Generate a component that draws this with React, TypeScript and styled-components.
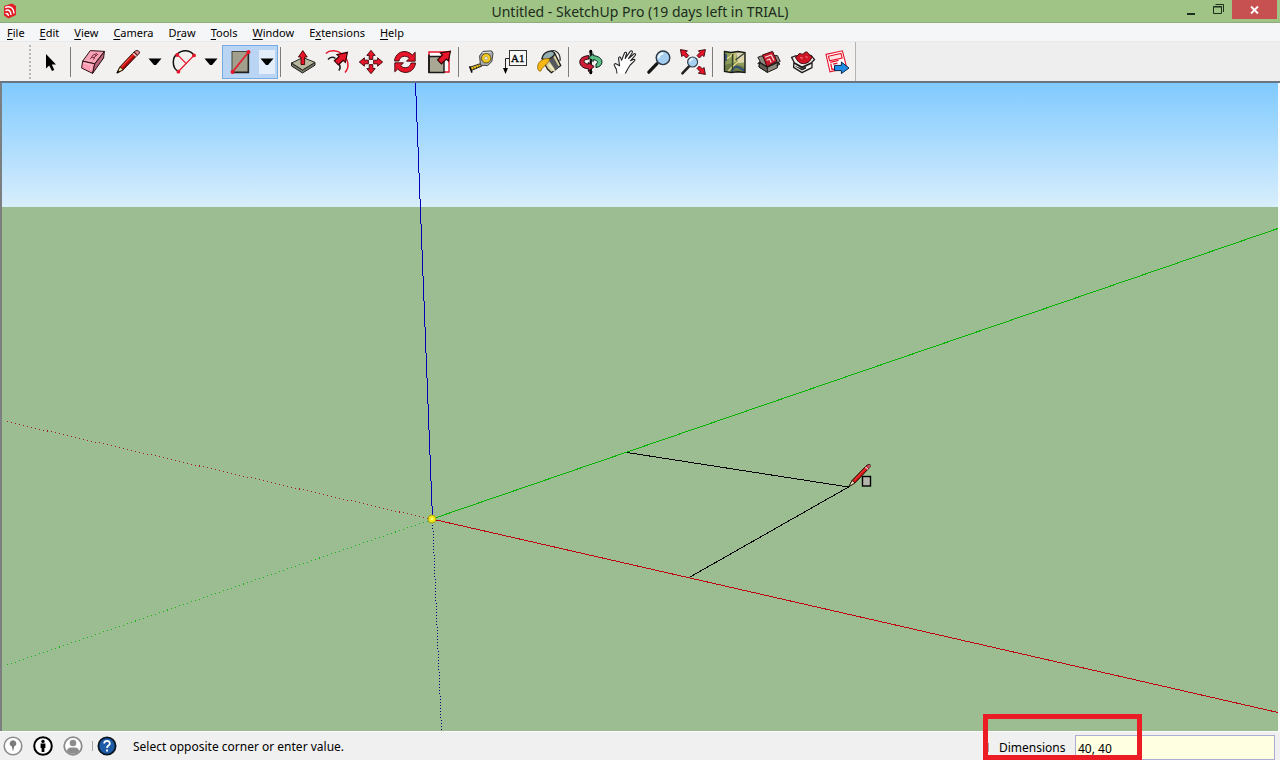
import React from 'react';
import styled, { createGlobalStyle } from 'styled-components';

const GlobalStyle = createGlobalStyle`
  * { box-sizing: border-box; }
  body { margin: 0; background: #f0f0f0; }
  button { font: inherit; color: inherit; }
`;

const Window = styled.div`
  display: flex;
  flex-direction: column;
  min-height: 100vh;
  font-family: 'Noto Sans', sans-serif;
  font-size: 12px;
  color: #000;
`;

const TitleBar = styled.header`
  display: grid;
  grid-template-columns: 1fr auto 1fr;
  height: 23px;
  background: #9fc485;
  border-bottom: 1px solid #8fad7c;
`;

const AppIcon = styled.svg`
  width: 16px;
  height: 16px;
  margin: 3px 2px;
`;

const Title = styled.h1`
  margin: 0;
  font-size: 14px;
  line-height: 23px;
  font-weight: 400;
  color: #1d2b1c;
  white-space: nowrap;
`;

const WindowControls = styled.div`
  display: flex;
  justify-content: flex-end;
  padding-right: 3px;
`;

const WindowButton = styled.button<{ $close?: boolean }>`
  width: ${(p) => (p.$close ? 45 : 27)}px;
  height: 19px;
  padding: 0;
  border: 0;
  background: ${(p) => (p.$close ? '#c75050' : 'transparent')};
  svg { display: block; margin: 0 auto; }
`;

const MenuBar = styled.nav`
  display: flex;
  gap: 1px;
  height: 19px;
  background: #f5f6f7;
  border-bottom: 1px solid #e8e9ea;
`;

const MenuButton = styled.button`
  padding: 2px 7px 0;
  border: 0;
  background: transparent;
  font-size: 11px;
  line-height: 16px;
  u { text-underline-offset: 2px; }
`;

const ToolStrip = styled.div`
  background: #eeeeee;
  border-bottom: 2px solid #687680;
`;

const ToolBar = styled.div`
  display: inline-flex;
  vertical-align: top;
  align-items: center;
  height: 39px;
  padding: 1px 1px 0 0;
  background: #f2f1f0;
  border-right: 1px solid #b4b4b4;
`;

const Grip = styled.div`
  width: 2px;
  height: 34px;
  margin: 0 3px 0 29px;
  background: repeating-linear-gradient(#b8b8b8 0 2px, transparent 2px 4px);
`;

const Separator = styled.div`
  width: 1px;
  height: 30px;
  margin: 0 5px 0 2px;
  background: #7c7c7c;
`;

const ToolButton = styled.button<{ $wide?: boolean }>`
  display: grid;
  place-items: center;
  width: ${(p) => (p.$wide ? 36 : 34)}px;
  height: 34px;
  padding: 0;
  border: 0;
  background: transparent;
`;

const SplitTool = styled.div<{ $active?: boolean }>`
  display: flex;
  align-items: center;
  height: 34px;
  background: ${(p) => (p.$active ? '#b9d5f3' : 'transparent')};
  box-shadow: ${(p) => (p.$active ? 'inset 0 0 0 1px #76ace4' : 'none')};
`;

const CaretButton = styled.button<{ $active?: boolean }>`
  display: grid;
  place-items: center;
  width: 16px;
  height: 24px;
  margin: 0 3px 0 1px;
  padding: 0;
  border: 0;
  background: ${(p) => (p.$active ? '#e3eefa' : 'transparent')};
`;

const Glyph = styled.svg`
  display: block;
  width: 24px;
  height: 24px;
  overflow: visible;
`;

const Viewport = styled.main`
  flex: 1 1 0;
  display: flex;
  min-height: 320px;
  border: solid #fafafa;
  border-width: 0 2px 1px 0;
  background: #9bbd91;
  box-shadow: inset 2px 0 0 #7c7f80;
  padding-left: 2px;
`;

const Scene = styled.svg`
  flex: 1;
  display: block;
  width: 100%;
  height: 100%;
  min-width: 0;
`;

const StatusBar = styled.footer`
  display: flex;
  justify-content: space-between;
  height: 28px;
  background: #f0f0f0;
`;

const StatusTools = styled.div`
  display: flex;
  align-items: center;
  padding-left: 3px;
`;

const StatusButton = styled.button`
  width: 20px;
  height: 20px;
  margin-right: 10px;
  padding: 0;
  border: 0;
  background: transparent;
  svg { display: block; }
`;

const StatusDivider = styled.span`
  width: 1px;
  height: 10px;
  margin: 0 4px 0 -1px;
  background: #a8a8a8;
`;

const StatusText = styled.span`
  padding: 2px 0 0 6px;
  line-height: 28px;
  white-space: nowrap;
`;

const Measurements = styled.div`
  position: relative;
  display: flex;
  align-items: flex-end;
  padding: 0 5px 0 5px;
`;

const MeasureDivider = styled.span`
  width: 1px;
  height: 9px;
  margin: 0 10px 8px 0;
  background: #a8a8a8;
`;

const MeasureLabel = styled.label`
  width: 76px;
  line-height: 25px;
`;

const MeasureInput = styled.input`
  width: 200px;
  height: 25px;
  padding: 1px 2px 0;
  border: 1px solid #abadd3;
  background: #ffffe1;
  font: inherit;
  color: #000;
`;

const Highlight = styled.div`
  position: absolute;
  left: 0;
  bottom: 0;
  width: 159px;
  height: 46px;
  border: 5px solid #ec1c24;
  pointer-events: none;
`;

const RED = '#e8142a';

const Caret = () => (
  <svg width="14" height="8" viewBox="0 0 14 8" aria-hidden="true">
    <path d="M0.5 0.5H13.5L8 7H6Z" />
  </svg>
);

const SelectIcon = () => (
  <Glyph viewBox="0 0 24 24">
    <path d="M7 4V18.5L10.2 15.5L13 21L15.3 20L12.8 14.5H17Z" fill="#000" />
  </Glyph>
);

const EraserIcon = () => (
  <Glyph viewBox="0 0 24 24" stroke="#2b1016" strokeWidth="1" strokeLinejoin="round">
    <path d="M9.3 0.6L23.4 1.4L13.8 13.8L1.6 11.2Z" fill="#f7a4b6" />
    <path d="M1.6 11.2L13.8 13.8L11.6 23.4L0.6 18Z" fill="#fb9cb0" />
    <path d="M23.4 1.4L13.8 13.8L11.6 23.4L22.6 8Z" fill="#b8657a" />
    <path d="M9.5 9L12 5M12.5 9.5L15 4.5M11 7L14 8M14.5 6.5L17 4M12 5L16 3.5" fill="none" stroke="#7d2b40" />
    <path d="M3 13L10.5 15L9.5 20" fill="none" stroke="#ffc6d1" />
  </Glyph>
);

const PencilIcon = () => (
  <Glyph viewBox="0 0 24 24">
    <path d="M1 23L4 16.8L18 2L21.4 5L7.2 19.8Z" fill="#d91412" stroke="#25100c" />
    <path d="M5.6 16.6L18.4 3.2" stroke="#ff5a4a" strokeWidth="0.8" />
    <path d="M6.8 18.8L20.3 5" stroke="#7d0b0b" strokeWidth="1.1" />
    <path d="M18 2L20 0.6H22.2L23.4 1.8V3.4L21.4 5Z" fill="#e58a90" stroke="#25100c" strokeWidth="0.9" />
    <path d="M17 3.2L20.4 6.2" stroke="#dcdcdc" strokeWidth="1.4" />
    <path d="M1 23L4 16.8L7.2 19.8Z" fill="#efe39c" stroke="#25100c" strokeWidth="0.9" />
    <path d="M0.6 23.4L1.8 20.2L4 21.8Z" fill="#0c0c0c" />
  </Glyph>
);

const ArcIcon = () => (
  <Glyph viewBox="0 0 24 24" fill="none">
    <path d="M6.4 21.5C-0.5 18 0 7 5.4 4C10 -0.8 18.5 -0.5 22 5.4" stroke="#111" strokeWidth="1.5" />
    <path d="M6.4 21.5L22 5.4M5.4 4.6L14 13.4" stroke={RED} strokeWidth="1.3" />
    <g fill={RED}><circle cx="6.4" cy="21.7" r="1.9" /><circle cx="22" cy="5.4" r="1.9" /><circle cx="5.2" cy="5" r="1.9" /></g>
  </Glyph>
);

const RectangleIcon = () => (
  <Glyph viewBox="0 0 24 24">
    <rect x="4" y="1.5" width="16" height="20.5" fill="#a2a08c" stroke="#46463d" />
    <path d="M20.5 1.5V22.5H4" fill="none" stroke="#222" strokeWidth="1.3" />
    <path d="M4.5 22L20.5 2" stroke={RED} strokeWidth="1.5" />
    <circle cx="4.5" cy="22" r="2" fill={RED} /><circle cx="20.5" cy="2" r="2" fill={RED} />
  </Glyph>
);

const PushPullIcon = () => (
  <Glyph viewBox="0 0 24 24" strokeLinejoin="round">
    <path d="M0.5 13V16L11.5 23L24 15.2V12.4L11.5 20Z" fill="#77766a" stroke="#24241f" />
    <path d="M0.5 13L12 7.5L24 12.4L11.5 20Z" fill="#b7b7a0" stroke="#24241f" />
    <path d="M10 14.5V7H7.4L11.8 0.6L16.2 7H13.6V14.5Z" fill={RED} stroke="#400" strokeWidth="0.9" />
  </Glyph>
);

const OffsetIcon = () => (
  <Glyph viewBox="0 0 24 24" fill="none">
    <path d="M0.8 3.5C5 -0.5 12.5 0.2 17 4C23.5 9 25 17 20 22.5" stroke={RED} strokeWidth="1.5" />
    <path d="M3 9.5C5.5 6.5 8.5 6.8 10.5 8.5M13.5 13.5C15.3 15.5 15.4 18.5 13.8 20.5" stroke="#222" strokeWidth="1.6" />
    <path d="M9.4 10.8L14 6.6L12 4.6L22.4 2.4L20.4 12.4L18.2 10.4L13.4 14.8Z" fill={RED} stroke="#300" strokeWidth="1.2" />
  </Glyph>
);

const MoveIcon = () => (
  <Glyph viewBox="0 0 24 24">
    {[0, 90, 180, 270].map((a) => (
      <path key={a} transform={`rotate(${a} 12 12)`} d="M12 0.3L16.2 5.4H13.8V9.4H10.2V5.4H7.8Z" fill={RED} stroke="#3a0508" strokeWidth="0.9" />
    ))}
  </Glyph>
);

const RotateIcon = () => (
  <Glyph viewBox="0 0 24 24" fill={RED} stroke="#3a0508" strokeWidth="0.9">
    <path d="M1.5 11C2 4.5 8 0 14.5 2C16.5 2.6 18 3.6 19.3 5L22.2 2.2V11.2H13.5L16.4 8.2C12.5 4.6 6.6 6.4 6 11Z" />
    <path d="M22.5 13C22 19.5 16 24 9.5 22C7.5 21.4 6 20.4 4.7 19L1.8 21.8V12.8H10.5L7.6 15.8C11.5 19.4 17.4 17.6 18 13Z" />
  </Glyph>
);

const ScaleIcon = () => (
  <Glyph viewBox="0 0 24 24">
    <path d="M2 2H22V22H2Z" fill="#fff" stroke={RED} strokeWidth="1.4" />
    <path d="M2 6.5H17V22.5H2Z" fill="#a9a894" stroke="#181818" strokeWidth="1.4" />
    <path d="M2 22.5V4.5" stroke="#181818" strokeWidth="1.5" />
    <path d="M10.6 9.8L15.4 5L13.4 3L23.4 1.2L21.4 11L19.4 9L14.4 13.8Z" fill={RED} stroke="#300" strokeWidth="1.2" />
  </Glyph>
);

const TapeIcon = () => (
  <Glyph viewBox="0 0 24 24" strokeLinejoin="round">
    <path d="M1 17.2L11.6 13.6L13 16L2.6 20.4Z" fill="#f0c419" stroke="#222" />
    <path d="M0.6 16.2L3 22.6" stroke="#111" strokeWidth="1.6" />
    <path d="M4.5 17.5L5.2 19M7 16.5L7.8 18M9.5 15.7L10.3 17" stroke="#222" strokeWidth="0.9" />
    <path d="M10.6 5.8L14 1.4L22.6 0.9L24 3.4L22.8 11.6L18.6 15.6L11.4 15.2Z" fill="#a4a9ad" stroke="#333" strokeWidth="0.9" />
    <circle cx="17.2" cy="8.2" r="4.7" fill="#f6cb1c" stroke="#5a4c10" strokeWidth="0.9" />
    <circle cx="17.2" cy="8.2" r="1.8" fill="#e9e5c8" stroke="#a39d70" strokeWidth="0.6" />
    <path d="M13.6 2.7L21.8 2.2" stroke="#e4e7e8" />
  </Glyph>
);

const LabelText = styled.text`
  font: 11px 'Liberation Serif', serif;
`;

const TextIcon = () => (
  <Glyph viewBox="0 0 24 24">
    <rect x="6.5" y="0.5" width="17" height="15" fill="#f8f8f8" stroke="#333" />
    <LabelText x="8" y="12" stroke="#000" strokeWidth="0.3">A1</LabelText>
    <path d="M6.5 8.5H2.5V19" fill="none" stroke="#222" />
    <path d="M0 18H5L2.5 24Z" fill="#000" />
  </Glyph>
);

const PaintIcon = () => (
  <Glyph viewBox="0 0 24 24" strokeLinejoin="round">
    <path d="M5 8.5L17.4 2.8L23.8 15.6L14.4 22.8L10.4 19Z" fill="#d7cfa0" stroke="#1f1f1c" strokeWidth="1.3" />
    <path d="M15.5 5.5L22 17.2L18.4 20L11.5 10Z" fill="#55585a" />
    <path d="M12 14.6L17.4 21" stroke="#f3ecc4" strokeWidth="1.8" />
    <path d="M5 8.5C6 2 14 -0.8 17.4 2.8C18.5 6.5 9 11.6 5 8.5Z" fill="#93adb1" stroke="#1f1f1c" strokeWidth="1.2" />
    <path d="M13.5 1C19 -1 24 4 23 11" fill="none" stroke="#2c2c2c" strokeWidth="1.2" />
    <path d="M13 9C8 7.4 1 10.4 0.6 17C0.4 20.5 3.4 22.8 4.4 20C5 16.8 8.8 16.8 13 9Z" fill="#f8b713" stroke="#7a5400" strokeWidth="0.7" />
  </Glyph>
);

const OrbitIcon = () => (
  <Glyph viewBox="0 0 24 24" strokeLinejoin="round">
    <path d="M11.8 0V24" stroke="#111" strokeWidth="2" />
    <path d="M9.8 5.6C4 6 0.6 8.4 0.8 12.4C1.2 16.6 5.4 18.6 9.4 18.8V21.4L15.2 16.6L9.4 12.4V14.2C6.6 13.8 5 12.6 5 11.2C5.2 9.8 7.4 9.2 9.8 9Z" fill="#cf1c36" stroke="#24090c" />
    <path d="M14.2 5.6C19.4 6 23.2 8.6 23 12.2C22.8 15.2 20.4 17 17 17.6V14C19.4 13.2 19.6 10.4 14.2 9.6V11.6L9.8 7.6L14.2 3.6Z" fill="#5abf85" stroke="#10241a" />
    <path d="M11.8 0V5M11.8 9V13.6M11.8 19V24" stroke="#111" strokeWidth="2" />
    <path d="M9.6 2.6L11.8 -0.4L14 2.6ZM9.6 21.6L11.8 24.4L14 21.6Z" />
  </Glyph>
);

const PanIcon = () => (
  <Glyph viewBox="0 0 24 24">
    <path d="M4 23.5C4.2 20 3.2 18 1.4 15.6C0.6 14 2 13.2 3.4 14L6.6 15.8L5.6 8.8C5.4 6.6 7.4 6.2 7.8 8.2L8.6 10.2L11.4 3.2C12.2 1.6 14 2.2 13.4 4L12.2 8.4L17.2 1.4C18.4 0 20 1.2 19.2 2.8L15.6 8.6L20.8 4C22.2 2.8 23.2 4.2 22.2 5.4L17.4 10.8L20.4 9.6C22 9 22.4 10.2 21.2 11.2L17.2 15C15.2 18 14.2 20 12.2 23.5" fill="#fff" stroke="#222" strokeWidth="1.1" strokeLinejoin="round" />
  </Glyph>
);

const ZoomIcon = () => (
  <Glyph viewBox="0 0 24 24">
    <path d="M1.8 22.2L10 13.6" stroke="#171717" strokeWidth="3.2" strokeLinecap="round" />
    <circle cx="16" cy="7.8" r="6.8" fill="#a4cdf0" stroke="#2c3844" strokeWidth="1.4" />
    <path d="M11.5 8.3C11.5 5.2 13.8 3.4 16.4 3.6" stroke="#f2faff" strokeWidth="2" fill="none" />
  </Glyph>
);

const ExtentsIcon = () => (
  <Glyph viewBox="0 0 24 24">
    <path d="M1.4 23.4L8 16.4" stroke="#222" strokeWidth="2.6" strokeLinecap="round" />
    <circle cx="11.6" cy="12" r="5" fill="#a9d2f2" stroke="#39444f" strokeWidth="1.2" />
    <path d="M8.8 11.6C9.2 9.6 10.4 9 12 9" stroke="#f2faff" strokeWidth="1.5" fill="none" />
    <g fill={RED} stroke="#34060a" strokeWidth="0.9">
      <path d="M-0.6 -0.4L6.4 0.8L4.8 2.6L7.8 5.6L5.4 8L2.4 5L0.8 6.6Z" />
      <path d="M24.4 -0.4L17.4 0.8L19 2.6L16 5.6L18.4 8L21.4 5L23 6.6Z" />
      <path d="M24.4 24.4L17.4 23.2L19 21.4L16 18.4L18.4 16L21.4 19L23 17.4Z" />
    </g>
  </Glyph>
);

const MapIcon = () => (
  <Glyph viewBox="0 0 24 24">
    <path d="M1.5 1.5L8 2.5L15 1.5L22 2.5V22.5L15 21.8L8 22.5L1.5 21.5Z" fill="#8d9c59" />
    <path d="M13 2L21.5 3V12.6L15 13Z" fill="#ddd5ba" />
    <path d="M2 15L9 13L21.5 17V22L2 21Z" fill="#6c7a48" />
    <path d="M2 9C7 8 9 5 9.5 2.5M12 2.5V12M5 21.5C8 18 11 14 21 8" stroke="#e4d98a" strokeWidth="1.3" fill="none" />
    <path d="M9 22C10 17 13 14 21.5 21M3 4V11" stroke="#2c4a82" strokeWidth="1.7" fill="none" />
    <path d="M12.5 10L21 3.6M9.5 4V20" stroke="#39442a" strokeWidth="1.3" />
    <path d="M1.5 1.5L8 2.5L15 1.5L22 2.5V22.5L15 21.8L8 22.5L1.5 21.5Z" fill="none" stroke="#191c14" strokeWidth="1.4" />
  </Glyph>
);

const WarehouseIcon = () => (
  <Glyph viewBox="0 0 24 24" strokeLinejoin="round">
    <path d="M3.6 6.2L0.8 7.4L3 11L2 17L10.4 22.4L20.4 17.8V13.2L23.2 11.4L20.4 5.6Z" fill="#8d8a7f" stroke="#1d1b19" />
    <path d="M5.4 5L15.6 1.4L20 11.4L10 16.6Z" fill="#c91a2b" stroke="#3b080d" />
    <path d="M8 7.2L14.2 5L17 10.6M9.6 10.2L12.6 9L14.2 12.4" fill="none" stroke="#f6dfe0" strokeWidth="1.2" />
    <path d="M2.6 12.4L10.4 17.2V22.4L2 17Z" fill="#605d55" stroke="#1d1b19" />
    <path d="M0.8 14L2.6 12.2L10.4 17.2L20.4 12.4L22.6 14L19.6 16" fill="none" stroke="#1d1b19" strokeWidth="1.2" />
  </Glyph>
);

const ExtensionWarehouseIcon = () => (
  <Glyph viewBox="0 0 24 24" strokeLinejoin="round">
    <path d="M4 6L0.6 7.4L3 12L2.6 17.4L11 22.6L21 17.6V12L23.6 9.6L20 5.4Z" fill="#f2f0ee" stroke="#1d1b19" strokeWidth="1.3" />
    <path d="M4.4 7.4C7 6 7 3.4 9.4 3.6C11 4.6 12.4 4.2 14 2.4C16.4 1 17.4 3.4 18.6 5L21.6 7.2C19.6 8.8 19 12 16 12.8C13 14.4 9 13.6 7 11.2Z" fill="#cf1426" stroke="#3b080d" />
    <path d="M9.4 7.4L11.6 8.4M14.6 6.4L16.6 7.6" stroke="#f07a82" strokeWidth="1.2" />
    <path d="M2.8 12.8L11 17.4L21 12.8" stroke="#1d1b19" fill="none" strokeWidth="1.8" />
    <path d="M2.8 15.4L11 20.6L15 18.4V16.6L11 18.6Z" fill="#26221f" />
  </Glyph>
);

const LayoutIcon = () => (
  <Glyph viewBox="0 0 24 24">
    <path d="M1 4.4L17.4 0.8L21.8 18L5 21.8Z" fill="#fff" stroke={RED} strokeWidth="1.1" />
    <path d="M3.4 6.2L16 3.4L17.2 8L4.6 10.8Z" fill="#fde4e4" stroke={RED} strokeWidth="1.1" />
    <path d="M5.2 12.4L13.6 10.4M5.8 13.6L7 19.6L10 19M8 14.2L12.4 13.2" fill="none" stroke={RED} strokeWidth="1.3" />
    <path d="M9.5 15.4H16.4V12L24 18L16.4 23.6V20.6H9.5Z" fill="#1f8ce6" stroke="#082a4c" />
  </Glyph>
);

type Tool = { name: string; icon: React.FC; split?: boolean; active?: boolean };

const TOOL_GROUPS: Tool[][] = [
  [{ name: 'Select', icon: SelectIcon }],
  [
    { name: 'Eraser', icon: EraserIcon },
    { name: 'Line', icon: PencilIcon, split: true },
    { name: 'Arc', icon: ArcIcon, split: true },
    { name: 'Rectangle', icon: RectangleIcon, split: true, active: true },
  ],
  [
    { name: 'Push/Pull', icon: PushPullIcon },
    { name: 'Offset', icon: OffsetIcon },
    { name: 'Move', icon: MoveIcon },
    { name: 'Rotate', icon: RotateIcon },
    { name: 'Scale', icon: ScaleIcon },
  ],
  [
    { name: 'Tape Measure', icon: TapeIcon },
    { name: 'Text', icon: TextIcon },
    { name: 'Paint Bucket', icon: PaintIcon },
  ],
  [
    { name: 'Orbit', icon: OrbitIcon },
    { name: 'Pan', icon: PanIcon },
    { name: 'Zoom', icon: ZoomIcon },
    { name: 'Zoom Extents', icon: ExtentsIcon },
  ],
  [
    { name: 'Add Location', icon: MapIcon },
    { name: '3D Warehouse', icon: WarehouseIcon },
    { name: 'Extension Warehouse', icon: ExtensionWarehouseIcon },
    { name: 'Send to LayOut', icon: LayoutIcon },
  ],
];

// Each menu entry: text before the access key, the key, text after it.
const MENUS = [
  ['', 'F', 'ile'],
  ['', 'E', 'dit'],
  ['', 'V', 'iew'],
  ['', 'C', 'amera'],
  ['D', 'r', 'aw'],
  ['', 'T', 'ools'],
  ['', 'W', 'indow'],
  ['E', 'x', 'tensions'],
  ['', 'H', 'elp'],
];

const ModelScene = () => (
  <Scene viewBox="0 0 1276 648" preserveAspectRatio="xMidYMid slice" role="img" aria-label="Model view">
    <defs>
      <linearGradient id="sky" x1="0" y1="0" x2="0" y2="1">
        <stop offset="0" stopColor="#80caff" />
        <stop offset="1" stopColor="#d8eefc" />
      </linearGradient>
    </defs>
    <rect width="1276" height="648" fill="#9bbd91" />
    <rect width="1276" height="124" fill="url(#sky)" />
    <g fill="none" shapeRendering="crispEdges">
      <path d="M430.5 436L413.5 0" stroke="#0000b4" />
      <path d="M430 436L1276 145.5" stroke="#00b400" />
      <path d="M430 436L1276 629.5" stroke="#c00010" />
      {/* pathLength is the span along the longer axis, so dots fall on a regular pixel pitch */}
      <path d="M430.5 436L439.5 648" pathLength="212" stroke="#000078" strokeDasharray="1 2" />
      <path d="M430 436.5L2 338" pathLength="428" stroke="#a01818" strokeDasharray="1 3" />
      <path d="M430 436.5L2 583" pathLength="428" stroke="#14b414" strokeDasharray="1 3" />
      <path d="M625 369.5L846.5 404L688 494" stroke="#000" />
    </g>
    <circle cx="430" cy="436" r="4" fill="#f0e818" stroke="#a8a010" />
    <circle cx="430" cy="436" r="1.2" fill="#fffb90" />
    <g transform="translate(846 380.5)">
      <path d="M1 23L4 17L19 1.6L22 1V3.6L7 19.4Z" fill="#d81414" stroke="#1c0a08" />
      <path d="M6 17L18.5 4" stroke="#ff5c50" strokeWidth="0.7" />
      <path d="M1 23L4 17L7 19.4Z" fill="#efe6b4" stroke="#1c0a08" strokeWidth="0.8" />
      <path d="M17.4 3.4L20 5.8" stroke="#d8d8d8" strokeWidth="1.2" />
      <path d="M18.6 2L22.2 1V4L21.2 5Z" fill="#b45058" />
      <rect x="14.5" y="13" width="8" height="9.5" fill="#b4b4aa" stroke="#000" strokeWidth="1.4" />
    </g>
  </Scene>
);

export default function App() {
  return (
    <>
      <GlobalStyle />
      <Window>
        <TitleBar>
          <AppIcon viewBox="0 0 16 16" aria-hidden="true">
            <path d="M2 3L10 0.5L14 3V12L6.5 15.5L2 12.5Z" fill="#e01f26" />
            <path d="M3 4.6C7 2.6 11.6 4 12 10.5M3.4 7.6C6.6 6.2 8.8 7.6 9 12M3.6 10.6C5.2 10.2 6.2 11 6.4 13" fill="none" stroke="#fff" strokeWidth="1.4" />
          </AppIcon>
          <Title>Untitled - SketchUp Pro (19 days left in TRIAL)</Title>
          <WindowControls>
            <WindowButton aria-label="Minimize">
              <svg width="9" height="16" viewBox="0 0 9 16"><path d="M0 11H8V13H0Z" fill="#1c2e1c" /></svg>
            </WindowButton>
            <WindowButton aria-label="Restore">
              <svg width="11" height="16" viewBox="0 0 11 16" fill="none" stroke="#1c2e1c">
                <path d="M2.5 2.5H10.5V10" /><path d="M0.5 4.5H8.5V11.5H0.5Z" /><path d="M0 5H9" />
              </svg>
            </WindowButton>
            <WindowButton $close aria-label="Close">
              <svg width="9" height="16" viewBox="0 0 9 16"><path d="M1 4.5L8 11.5M8 4.5L1 11.5" stroke="#fff" strokeWidth="1.8" /></svg>
            </WindowButton>
          </WindowControls>
        </TitleBar>
        <MenuBar>
          {MENUS.map(([before, key, after]) => (
            <MenuButton key={before + key + after}>{before}<u>{key}</u>{after}</MenuButton>
          ))}
        </MenuBar>
        <ToolStrip>
          <ToolBar role="toolbar" aria-label="Getting Started">
            <Grip />
            {TOOL_GROUPS.map((group, i) => (
              <React.Fragment key={i}>
                {i > 0 && <Separator />}
                {group.map(({ name, icon: Icon, split, active }) =>
                  split ? (
                    <SplitTool key={name} $active={active}>
                      <ToolButton $wide aria-label={name} aria-pressed={!!active}><Icon /></ToolButton>
                      <CaretButton $active={active} aria-label={`${name} options`}><Caret /></CaretButton>
                    </SplitTool>
                  ) : (
                    <ToolButton key={name} aria-label={name}><Icon /></ToolButton>
                  )
                )}
              </React.Fragment>
            ))}
          </ToolBar>
        </ToolStrip>
        <Viewport>
          <ModelScene />
        </Viewport>
        <StatusBar>
          <StatusTools>
            <StatusButton aria-label="Geo-location">
              <svg width="20" height="20" viewBox="0 0 20 20">
                <circle cx="10" cy="10" r="8.8" fill="#fff" stroke="#8c8c8c" strokeWidth="1.6" />
                <path d="M10 4.2A3.2 3.2 0 0 1 11.2 10.4L10 15.6L8.8 10.4A3.2 3.2 0 0 1 10 4.2Z" fill="#7c7c7c" />
              </svg>
            </StatusButton>
            <StatusButton aria-label="Credits">
              <svg width="20" height="20" viewBox="0 0 20 20">
                <circle cx="10" cy="10" r="8.8" fill="#fff" stroke="#000" strokeWidth="2" />
                <circle cx="10" cy="5.4" r="1.7" /><path d="M7.6 7.6H12.4V12H11.4V16H8.6V12H7.6Z" />
              </svg>
            </StatusButton>
            <StatusButton aria-label="Sign in">
              <svg width="20" height="20" viewBox="0 0 20 20">
                <circle cx="10" cy="10" r="8.8" fill="#fff" stroke="#8c8c8c" strokeWidth="1.8" />
                <circle cx="10" cy="7" r="3.3" fill="#8c8c8c" /><path d="M4 15.5C4 11.5 7 11.4 10 11.4S16 11.5 16 15.5C13 18.6 7 18.6 4 15.5Z" fill="#8c8c8c" />
              </svg>
            </StatusButton>
            <StatusDivider />
            <StatusButton aria-label="Help">
              <svg width="20" height="20" viewBox="0 0 20 20">
                <circle cx="10" cy="10" r="8.6" fill="#1d5ba6" stroke="#0a1420" strokeWidth="1.8" />
                <path d="M7.2 7.6C7.2 4 12.8 4 12.8 7.4C12.8 9.6 10 9.4 10 12M10 13.4V15.4" fill="none" stroke="#fff" strokeWidth="1.8" />
              </svg>
            </StatusButton>
            <StatusText>Select opposite corner or enter value.</StatusText>
          </StatusTools>
          <Measurements>
            <MeasureDivider />
            <MeasureLabel htmlFor="dimensions">Dimensions</MeasureLabel>
            <MeasureInput id="dimensions" defaultValue="40, 40" />
            <Highlight />
          </Measurements>
        </StatusBar>
      </Window>
    </>
  );
}
